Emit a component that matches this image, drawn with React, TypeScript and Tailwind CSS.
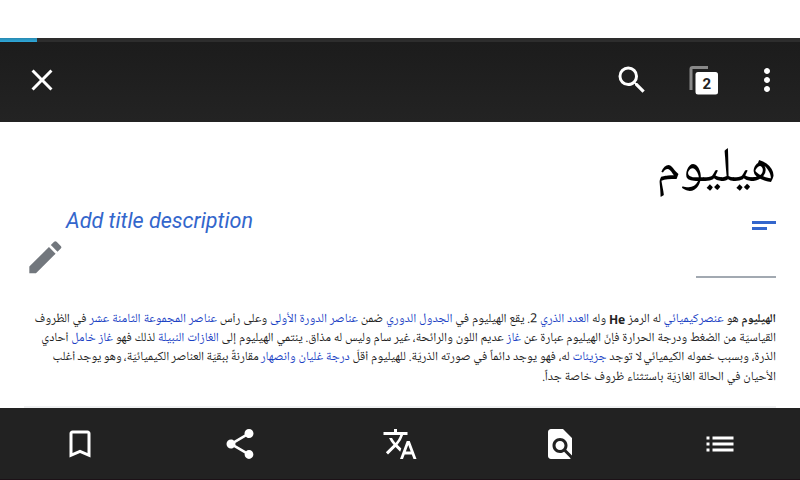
import React from "react";
import { MdClose, MdSearch, MdMoreVert, MdEdit, MdBookmarkBorder, MdShare, MdTranslate, MdFindInPage, MdList } from "react-icons/md";

function A({ children }: { children: React.ReactNode }) {
  return <a className="text-[#1a3fc4]">{children}</a>;
}

// One line of the article's lead paragraph
function Line({ children }: { children: React.ReactNode }) {
  return <p className="h-[19.4px] w-max whitespace-nowrap">{children}</p>;
}

function TabsIcon() {
  return (
    <svg className="h-9 w-9" viewBox="0 0 36 36">
      <path d="M25 5.5H9.5a1.5 1.5 0 0 0-1.5 1.5V28" fill="none" stroke="#888" strokeWidth="3" />
      <rect x="12.5" y="10" width="22.5" height="22.5" rx="2.5" fill="#fff" />
      <text x="23.7" y="26.5" textAnchor="middle" fontFamily="Roboto" fontWeight="700" fontSize="15" fill="#222">2</text>
    </svg>
  );
}

export default function App() {
  return (
    <div className="flex h-[480px] w-[800px] flex-col overflow-hidden bg-white pt-[38px] font-['Roboto',sans-serif]">
      <div className="h-1 shrink-0 bg-[#2d2d2d]">
        <div className="h-[4px] w-[37px] bg-gradient-to-b from-[#2789b0] to-[#2fa8da]" />
      </div>
      <header className="flex h-20 shrink-0 items-center bg-gradient-to-b from-[#1c1c1c] to-[#232323] pb-1 pl-6 pr-[15px] text-4xl text-white">
        <MdClose />
        <MdSearch className="ml-auto" />
        <div className="ml-[33px]"><TabsIcon /></div>
        <MdMoreVert className="ml-[30px]" />
      </header>
      <main className="flex h-[286px] shrink-0 flex-col overflow-hidden px-6" dir="rtl">
        <h1 className="h-[86px] shrink-0 pt-[17px] text-[49.3px] leading-[60px] text-black font-['Noto_Naskh_Arabic_UI','Noto_Naskh_Arabic',serif]">هيليوم</h1>
        <div className="flex h-[68px] shrink-0 justify-between">
          <div className="pt-[13px]">
            <div className="h-[3px] w-6 bg-[#36c]" />
            <div className="mt-[3px] mr-[9px] h-[3px] w-[15px] bg-[#36c]" />
          </div>
          <div className="flex w-[229px] flex-col items-end" dir="ltr">
            <p className="w-[187px] whitespace-nowrap text-[21.6px] leading-[26px] italic text-[#36c]">Add title description</p>
            <MdEdit className="mt-[2px] shrink-0 self-start text-[42.6px] text-[#72777d]" />
          </div>
        </div>
        <div className="h-[2px] w-20 shrink-0 bg-[#a2a9b1]" />
        <div className="mt-[31.6px] text-[12.6px] leading-[19.4px] text-[#222] font-['Noto_Naskh_Arabic_UI','Noto_Naskh_Arabic','Noto_Sans',sans-serif]">
          <Line><b className="text-[12.1px]">الهيليوم</b> هو <span className="[word-spacing:-2.5px]"><A>عنصر كيميائي</A></span> له الرمز <b className="font-['Noto_Sans'] text-[12px]">He</b> وله <A>العدد الذري</A> 2. يقع الهيليوم في <A>الجدول الدوري</A> ضمن <A>عناصر الدورة الأولى</A> وعلى رأس <A>عناصر المجموعة الثامنة عشر</A> في الظروف</Line>
          <Line>القياسيّة من الضغط ودرجة الحرارة فإنّ الهيليوم عبارة عن <A>غاز</A> عديم اللون والرائحة، غير سام وليس له مذاق. ينتمي الهيليوم إلى <A>الغازات النبيلة</A> لذلك فهو <A>غاز خامل</A> أحادي</Line>
          <Line>الذرة، وبسبب خموله <span className="[word-spacing:-1.5px]">الكيميائي لا</span> توجد <A>جزيئات</A> له، فهو يوجد دائماً في صورته الذريّة. للهيليوم أقلّ <A>درجة غليان وانصهار</A><span className="[word-spacing:-0.7px]"> مقارنةً ببقيّة العناصر الكيميائيّة، وهو يوجد أغلب</span></Line>
          <Line>الأحيان في الحالة الغازيّة باستثناء ظروف خاصة جداً.</Line>
        </div>
        <div className="mt-auto h-[2px] shrink-0 bg-[#f0f1f2]" />
      </main>
      <nav className="flex h-[72px] shrink-0 items-center border-b-[1px] border-[#1c1117] bg-[#222] text-4xl text-white">
        <div className="flex flex-1 justify-center"><MdBookmarkBorder /></div>
        <div className="flex flex-1 justify-center"><MdShare /></div>
        <div className="flex flex-1 justify-center"><MdTranslate /></div>
        <div className="flex flex-1 justify-center"><MdFindInPage /></div>
        <div className="flex flex-1 justify-center"><MdList /></div>
      </nav>
    </div>
  );
}
